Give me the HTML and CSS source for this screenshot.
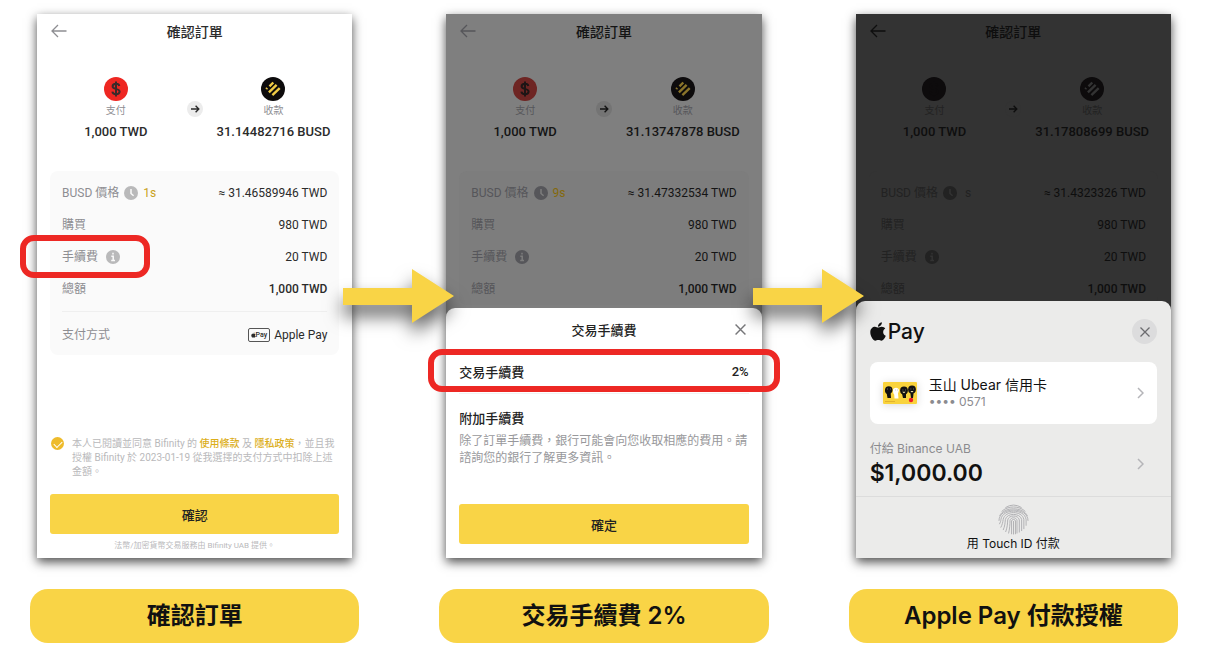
FILE: index.html
```html
<!DOCTYPE html>
<html lang="zh-Hant">
<head>
  <meta charset="UTF-8">
  <meta name="viewport" content="width=device-width, initial-scale=1.0">
  <title>確認訂單</title>
  <link rel="stylesheet" href="styles.css">
</head>
<body>
  <!-- Shared icons -->
  <svg class="sprite" aria-hidden="true">
    <symbol id="back" viewBox="0 0 16 14">
      <path d="M15.5 7H1M7 1L1 7l6 6" fill="none" stroke="currentColor" stroke-width="1.3"/>
    </symbol>
    <symbol id="dollar" viewBox="0 0 24 24">
      <circle cx="12" cy="12" r="12" fill="var(--coin)"/>
      <path d="M12 4.5v15M15.3 9c-.2-1.5-1.500-2.200-3.300-2.200-2 0-3.400.9-3.400 2.500 0 3.500 7 1.700 7 5.300 0 1.700-1.500 2.600-3.600 2.600-2 0-3.400-.9-3.600-2.600" fill="none" stroke="var(--coin-sign)" stroke-width="2"/>
    </symbol>
    <symbol id="busd" viewBox="0 0 24 24">
      <circle cx="12" cy="12" r="12" fill="#0d0b0c"/>
      <path d="M5.200 12L6.200 11M8.500 9.300L12.300 5.500M7.900 15.300L15.600 7.900M11.400 18.100L18.700 11.200" fill="none" stroke="var(--busd)" stroke-width="2.400"/>
    </symbol>
    <symbol id="next" viewBox="0 0 16 16">
      <circle cx="8" cy="8" r="8" fill="var(--chip)"/>
      <path d="M4 8h7.500M8.600 4.800L11.800 8l-3.200 3.200" fill="none" stroke="var(--text)" stroke-width="1.4"/>
    </symbol>
    <symbol id="clock" viewBox="0 0 14 14">
      <circle cx="7" cy="7" r="7" fill="var(--icon)"/>
      <path d="M7 3v4.500l2.600 2.300" fill="none" stroke="var(--panel)" stroke-width="1.5"/>
    </symbol>
    <symbol id="info" viewBox="0 0 14 14">
      <circle cx="7" cy="7" r="7" fill="var(--icon)"/>
      <path d="M7 2.700v1.800M5.300 6.300H7.200v4M5.200 10.500h3.800" fill="none" stroke="var(--panel)" stroke-width="1.5"/>
    </symbol>
    <symbol id="close" viewBox="0 0 10 10">
      <path d="M.5.5l9 9M9.500.5l-9 9" fill="none" stroke="currentColor" stroke-width="1.3"/>
    </symbol>
    <symbol id="chevron" viewBox="0 0 7 12">
      <path d="M1 1l5 5-5 5" fill="none" stroke="currentColor" stroke-width="1.5"/>
    </symbol>
    <symbol id="apple" viewBox="0 0 384 512">
      <path fill="currentColor" d="M318.700 268.700c-.2-36.700 16.400-64.400 50-84.800-18.800-26.900-47.200-41.700-84.700-44.600-35.500-2.800-74.300 20.700-88.500 20.700-15 0-49.400-19.700-76.400-19.700C63.300 141.200 4 184.800 4 273.500q0 39.300 14.400 81.200c12.800 36.700 59 126.700 107.200 125.200 25.200-.6 43-17.900 75.800-17.900 31.800 0 48.300 17.900 76.400 17.900 48.600-.7 90.400-82.500 102.600-119.300-65.200-30.700-61.700-90-61.700-91.900zm-56.600-164.200c27.300-32.400 24.800-61.900 24-72.500-24.100 1.400-52 16.400-67.900 34.900-17.500 19.800-27.800 44.300-25.600 71.900 26.100 2 49.900-11.400 69.500-34.300z"/>
    </symbol>
    <symbol id="arrow" viewBox="0 0 111 54">
      <path fill="#f9d446" d="M0 19h69V0l42 27-42 27V36H0z"/>
    </symbol>
  </svg>

  <main class="steps">
    <section class="step">
      <div class="screen">
        <header class="bar">
          <button class="icon-btn back" aria-label="返回"><svg><use href="#back"/></svg></button>
          <h2>確認訂單</h2>
        </header>
        <div class="exchange">
          <div class="side">
            <svg class="coin"><use href="#dollar"/></svg>
            <span>支付</span>
            <strong>1,000 TWD</strong>
          </div>
          <svg class="next"><use href="#next"/></svg>
          <div class="side">
            <svg class="coin"><use href="#busd"/></svg>
            <span>收款</span>
            <strong>31.14482716 BUSD</strong>
          </div>
        </div>
        <dl class="details">
          <div class="row"><dt>BUSD 價格 <svg><use href="#clock"/></svg> <b>1s</b></dt><dd>≈ 31.46589946 TWD</dd></div>
          <div class="row"><dt>購買</dt><dd>980 TWD</dd></div>
          <div class="row"><dt class="marked">手續費 <svg class="info"><use href="#info"/></svg></dt><dd>20 TWD</dd></div>
          <div class="row total"><dt>總額</dt><dd>1,000 TWD</dd></div>
          <div class="row method">
            <dt>支付方式</dt>
            <dd><span class="badge"><svg><use href="#apple"/></svg>Pay</span> Apple Pay</dd>
          </div>
        </dl>
        <div class="consent">
          <input type="checkbox" id="agree" checked>
          <label for="agree">本人已閱讀並同意 Bifinity 的 <a href="#terms">使用條款</a> 及 <a href="#privacy">隱私政策</a>，並且我<br>授權 Bifinity 於 2023-01-19 從我選擇的支付方式中扣除上述<br>金額。</label>
        </div>
        <button class="primary">確認</button>
        <p class="provider">法幣/加密貨幣交易服務由 Bifinity UAB 提供。</p>
      </div>
      <svg class="flow-arrow"><use href="#arrow"/></svg>
      <h3 class="caption">確認訂單</h3>
    </section>

    <section class="step">
      <div class="screen dim">
        <header class="bar">
          <button class="icon-btn back" aria-label="返回"><svg><use href="#back"/></svg></button>
          <h2>確認訂單</h2>
        </header>
        <div class="exchange">
          <div class="side">
            <svg class="coin"><use href="#dollar"/></svg>
            <span>支付</span>
            <strong>1,000 TWD</strong>
          </div>
          <svg class="next"><use href="#next"/></svg>
          <div class="side">
            <svg class="coin"><use href="#busd"/></svg>
            <span>收款</span>
            <strong>31.13747878 BUSD</strong>
          </div>
        </div>
        <dl class="details">
          <div class="row"><dt>BUSD 價格 <svg><use href="#clock"/></svg> <b>9s</b></dt><dd>≈ 31.47332534 TWD</dd></div>
          <div class="row"><dt>購買</dt><dd>980 TWD</dd></div>
          <div class="row"><dt>手續費 <svg class="info"><use href="#info"/></svg></dt><dd>20 TWD</dd></div>
          <div class="row total"><dt>總額</dt><dd>1,000 TWD</dd></div>
        </dl>
        <div class="sheet fee-sheet">
          <div class="sheet-title">
            <h2>交易手續費</h2>
            <button class="icon-btn close" aria-label="關閉"><svg><use href="#close"/></svg></button>
          </div>
          <div class="fee"><span>交易手續費</span><span>2%</span></div>
          <h4>附加手續費</h4>
          <p>除了訂單手續費，銀行可能會向您收取相應的費用。請諮詢您的銀行了解更多資訊。</p>
          <button class="primary">確定</button>
        </div>
      </div>
      <svg class="flow-arrow"><use href="#arrow"/></svg>
      <h3 class="caption">交易手續費 2%</h3>
    </section>

    <section class="step">
      <div class="screen dark">
        <header class="bar">
          <button class="icon-btn back" aria-label="返回"><svg><use href="#back"/></svg></button>
          <h2>確認訂單</h2>
        </header>
        <div class="exchange">
          <div class="side">
            <svg class="coin"><use href="#dollar"/></svg>
            <span>支付</span>
            <strong>1,000 TWD</strong>
          </div>
          <svg class="next"><use href="#next"/></svg>
          <div class="side">
            <svg class="coin"><use href="#busd"/></svg>
            <span>收款</span>
            <strong>31.17808699 BUSD</strong>
          </div>
        </div>
        <dl class="details">
          <div class="row"><dt>BUSD 價格 <svg><use href="#clock"/></svg> <b>&nbsp;s</b></dt><dd>≈ 31.4323326 TWD</dd></div>
          <div class="row"><dt>購買</dt><dd>980 TWD</dd></div>
          <div class="row"><dt>手續費 <svg class="info"><use href="#info"/></svg></dt><dd>20 TWD</dd></div>
          <div class="row total"><dt>總額</dt><dd>1,000 TWD</dd></div>
        </dl>
        <div class="sheet pay-sheet">
          <div class="pay-head">
            <div class="pay-logo"><svg><use href="#apple"/></svg>Pay</div>
            <button class="round-close" aria-label="關閉"><svg><use href="#close"/></svg></button>
          </div>
          <button class="card">
            <svg class="card-art" viewBox="0 0 34 22">
              <rect width="34" height="22" rx="1" fill="#f9d33c"/>
              <path d="M2 7.500a3.800 3.800 0 0 1 7.500 0c.3 2-.8 3.200-1.800 4l.3 4.500H4.500l-.7-4C2.500 11 1.700 9.500 2 7.500z" fill="#111"/>
              <path d="M10 8c0-3 6-3.500 6 .5l-1 3 .5 5h-4l-.3-4C10.300 11.500 10 10 10 8z" fill="#fff"/>
              <circle cx="21" cy="8.500" r="3.900" fill="#111"/>
              <path d="M19 11.500h4V16h-3z" fill="#111"/>
              <circle cx="29" cy="7.500" r="3.900" fill="#111"/>
              <path d="M27.300 10h3.400l-.7 6h-2z" fill="#111"/>
              <path d="M19.200 9.700h3.400l-1.600 1.500zM27.400 9h3.200L29 10.400z" fill="#f8e9b0"/>
              <path d="M4 7h.8M7 7h.8M12.200 8h.6M14.200 8h.6M19.500 8h.8M22 8h.8M27.500 7h.8M30 7h.8" stroke="#999" stroke-width=".8"/>
              <circle cx="28" cy="18" r="2.200" fill="#ed1c24"/>
              <path d="M2 19.500h10" stroke="#dca92a" stroke-width=".8"/>
            </svg>
            <span class="card-text">
              <span class="card-name">玉山 Ubear 信用卡</span>
              <span class="card-number">•••• 0571</span>
            </span>
            <svg class="chevron"><use href="#chevron"/></svg>
          </button>
          <div class="payee">
            <div>
              <span>付給 Binance UAB</span>
              <strong>$1,000.00</strong>
            </div>
            <svg class="chevron"><use href="#chevron"/></svg>
          </div>
          <div class="touch">
            <svg class="finger" viewBox="0 0 32 32">
              <g fill="none" stroke="#b0b0b3" stroke-width="1" stroke-linecap="round">
                <path d="M8 3.500A15 15 0 0 1 24 3.500M4 7.500C10 1.500 22 1.500 28 7.500M1.800 12C6 2.500 26 2.500 30.200 12M1 17C1 2.500 31 2.500 31 17M1.600 20.500c.8-1.500 1.400-3 1.400-4.500C4.500 4.500 27.500 4.500 29 16v6"/>
                <path d="M3 24c1.500-3 2-5 2.300-8C7 6.500 25 6.500 26.700 16v9.500M5.500 26.500C7 23 7.300 20 7.600 16c1.400-7 15.400-7 16.800 0v11.500M8 28.500c1.500-4 1.900-8 2-12 1-5.500 11-5.500 12 0v12.500M11 30c1-4 1.400-9 1.400-13 .6-3.700 6.600-3.700 7.200 0v13M14 30.800V17.500c0-2 4-2 4 0v13.300M16 18v13"/>
              </g>
            </svg>
            <span>用 Touch ID 付款</span>
          </div>
        </div>
      </div>
      <h3 class="caption">Apple Pay 付款授權</h3>
    </section>
  </main>
</body>
</html>
```
FILE: styles.css
```css
* {
  box-sizing: border-box;
}
body {
  margin: 0;
  background: #fff;
  font-family: Roboto, "Noto Sans CJK TC", sans-serif;
  color: #222;
}
h2, h3, h4, p, dl, dd {
  margin: 0;
}
button {
  font-family: inherit;
  border: none;
  padding: 0;
  cursor: pointer;
}
.sprite {
  position: absolute;
  width: 0;
  height: 0;
}
.steps {
  display: grid;
  grid-template-columns: repeat(3, 1fr);
  gap: 80px;
  padding: 14px 30px;
}
.step {
  position: relative;
  display: flex;
  flex-direction: column;
}

/* Phone screens */
.screen {
  --bg: #fff;
  --panel: #fafafa;
  --text: #2b2b2b;
  --label: #8e8e92;
  --icon: #b9b9ba;
  --chip: #ececec;
  --accent: #c9a21b;
  --coin: #ee2722;
  --coin-sign: #3a2a2a;
  --busd: #f0cb45;
  flex: 1;
  display: flex;
  flex-direction: column;
  margin: 0 7px;
  background: var(--bg);
  color: var(--text);
  box-shadow: 0 4px 10px rgba(0, 0, 0, 0.7);
}
.dim {
  --bg: #7f7f7f;
  --panel: #7d7d7d;
  --text: #141414;
  --label: #56565a;
  --icon: #56565a;
  --chip: #747474;
  --accent: #84690c;
  --coin: #6e2523;
  --coin-sign: #1d1515;
  --busd: #8a742a;
}
.dark {
  --bg: #333;
  --panel: #333;
  --text: #0e0e0e;
  --label: #222;
  --icon: #222;
  --chip: #333;
  --accent: #222;
  --coin: #0d0b0c;
  --coin-sign: #0d0b0c;
  --busd: #333;
}
.bar {
  display: grid;
  grid-template-columns: 16px 1fr 16px;
  align-items: center;
  height: 34px;
  padding: 0 14px;
  text-align: center;
}
.bar h2, .sheet-title h2 {
  font-size: 14px;
  font-weight: 500;
}
.icon-btn {
  display: flex;
  background: none;
  color: var(--label);
}
.dark .back {
  color: var(--text);
}
.back svg {
  width: 16px;
  height: 14px;
}
.exchange {
  display: grid;
  grid-template-columns: 1fr 16px 1fr;
  align-items: center;
  margin: 29px 8px 30px;
}
.side {
  display: flex;
  flex-direction: column;
  align-items: center;
  white-space: nowrap;
}
.coin {
  width: 24px;
  height: 24px;
}
.side span {
  margin-top: 3px;
  font-size: 10px;
  line-height: 14px;
  color: var(--label);
}
.side strong {
  margin-top: 5px;
  font-size: 13px;
  line-height: 18px;
  font-weight: 500;
}
.next {
  width: 16px;
  height: 16px;
}
.details {
  margin: 0 13px;
  padding: 6px 12px 0;
  background: var(--panel);
  border-radius: 8px;
}
.row {
  display: flex;
  justify-content: space-between;
  align-items: center;
  height: 32px;
  font-size: 12px;
  line-height: 18px;
}
.row dt {
  display: flex;
  align-items: center;
  gap: 5px;
  color: var(--label);
}
.row dt svg {
  width: 14px;
  height: 14px;
}
.row .info {
  margin-left: 3px;
}
.row b {
  font-weight: 400;
  color: var(--accent);
}
.row dd {
  display: flex;
  align-items: center;
  gap: 4px;
}
.total dd {
  font-weight: 500;
}
.method {
  height: 44px;
  margin-top: 6px;
  padding-top: 2px;
  border-top: 1px solid #efefef;
}
.badge {
  display: flex;
  align-items: center;
  padding: 0 2px;
  height: 14px;
  border: 1px solid #555;
  border-radius: 2px;
  font-size: 7px;
  font-weight: 500;
}
.badge svg {
  width: 5px;
  height: 6px;
}
.marked {
  position: relative;
}
.marked::after {
  content: "";
  position: absolute;
  inset: -13px -30px -12px -42px;
  border: 6px solid #ed2824;
  border-radius: 14px;
}
.consent {
  display: flex;
  gap: 8px;
  margin: 82px 13px 0;
  font-size: 10px;
  line-height: 14px;
  color: #b9b9bb;
  white-space: nowrap;
}
.consent a {
  color: #dcae1a;
  font-weight: 500;
  text-decoration: none;
}
.consent input {
  appearance: none;
  display: flex;
  justify-content: center;
  width: 13px;
  height: 13px;
  margin: 0 0 0 1px;
  border-radius: 50%;
  background: #eebb2b;
}
.consent input:checked::before {
  content: "";
  width: 7px;
  height: 4px;
  margin-top: 4px;
  border-left: 1px solid #fff;
  border-bottom: 1px solid #fff;
  transform: rotate(-45deg);
}
.primary {
  height: 40px;
  margin: 15px 13px 0;
  border-radius: 3px;
  background: #f9d446;
  color: #222;
  font-size: 13px;
  font-weight: 500;
}
.provider {
  font-size: 8px;
  line-height: 24px;
  text-align: center;
  color: #b9b9bb;
}

/* Bottom sheets */
.sheet {
  margin-top: auto;
  border-radius: 9px 9px 0 0;
}
/* the sheet slides over the end of the list */
.dim .details, .dark .details {
  margin-bottom: -8px;
}
.fee-sheet {
  display: flex;
  flex-direction: column;
  padding: 0 13px 14px;
  background: #fff;
  color: #222;
}
.sheet-title {
  display: grid;
  grid-template-columns: 16px 1fr 16px;
  align-items: center;
  height: 42px;
  text-align: center;
}
.sheet-title h2 {
  grid-column: 2;
}
.fee-sheet .sheet-title h2, .fee, .fee-sheet h4 {
  font-size: 13px;
  font-weight: 500;
}
.close {
  justify-content: center;
  color: #77777a;
}
.close svg {
  width: 11px;
  height: 11px;
}
.fee {
  position: relative;
  display: flex;
  justify-content: space-between;
  align-items: center;
  height: 44px;
  border-bottom: 1px solid #f2f2f2;
}
.fee::after {
  content: "";
  position: absolute;
  inset: -1px -31px 1px;
  border: 6px solid #ed2824;
  border-radius: 14px;
}
.fee-sheet h4 {
  margin-top: 15px;
  line-height: 20px;
}
.fee-sheet p {
  margin-top: 4px;
  font-size: 12px;
  line-height: 17px;
  color: #98989b;
}
.fee-sheet .primary {
  margin: 37px 0 0;
}

/* Apple Pay */
.pay-sheet {
  background: #ebebea;
  color: #111;
  font-family: Inter, "Noto Sans CJK TC", sans-serif;
}
.pay-head {
  display: flex;
  justify-content: space-between;
  align-items: center;
  height: 61px;
  padding: 0 14px;
}
.pay-logo {
  display: flex;
  align-items: center;
  gap: 2px;
  font-size: 21px;
  font-weight: 500;
}
.pay-logo svg {
  width: 16px;
  height: 21px;
}
.round-close {
  display: flex;
  align-items: center;
  justify-content: center;
  width: 25px;
  height: 25px;
  border-radius: 50%;
  background: #dcdcdd;
  color: #6b6b6f;
}
.round-close svg {
  width: 10px;
  height: 10px;
}
.card {
  display: flex;
  align-items: center;
  gap: 12px;
  width: calc(100% - 28px);
  height: 62px;
  margin: 0 14px;
  padding: 0 13px;
  border-radius: 8px;
  background: #fff;
  color: #111;
  text-align: left;
}
.card-art {
  width: 34px;
  height: 22px;
  box-shadow: 0 1px 8px rgba(0, 0, 0, 0.15);
}
.card-text {
  flex: 1;
  display: flex;
  flex-direction: column;
}
.card-name {
  font-size: 14px;
  line-height: 18px;
}
.card-number {
  font-size: 12px;
  line-height: 16px;
  color: #8b8b8f;
}
.chevron {
  width: 7px;
  height: 12px;
  color: #b5b5b9;
}
.payee {
  display: flex;
  justify-content: space-between;
  align-items: center;
  padding: 16px 27px 8px 14px;
}
.payee span {
  display: block;
  font-size: 12px;
  line-height: 18px;
  color: #8b8b8f;
}
.payee strong {
  display: block;
  font-size: 23px;
  line-height: 30px;
  font-weight: 600;
}
.touch {
  display: flex;
  flex-direction: column;
  align-items: center;
  padding: 7px 0 5px;
  border-top: 1px solid #dcdcdc;
  font-size: 12px;
  line-height: 18px;
}
.finger {
  width: 31px;
  height: 31px;
}

/* Between and below the screens */
.flow-arrow {
  position: absolute;
  top: 255px;
  right: -95px;
  z-index: 1;
  width: 111px;
  height: 54px;
  overflow: visible;
  filter: drop-shadow(0 11px 9px rgba(0, 0, 0, 0.6));
}
.caption {
  margin-top: 31px;
  border-radius: 18px;
  background: #f9d446;
  color: #111;
  font-family: Inter, "Noto Sans CJK TC", sans-serif;
  font-size: 24px;
  font-weight: 600;
  line-height: 54px;
  text-align: center;
}
```
